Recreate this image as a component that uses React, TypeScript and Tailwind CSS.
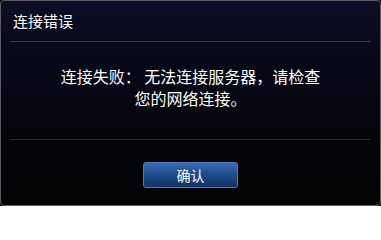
import React from "react";

const font = { fontFamily: '"Noto Sans CJK SC", "Noto Sans", sans-serif' };

export default function App() {
  return (
    <div className="h-[206px] w-[381px] bg-black" style={font}>
      <div className="flex h-full w-full flex-col overflow-hidden rounded-[4px] border border-[#5c5c64] bg-gradient-to-b from-[#0b0e25] via-[#05060f] to-[#020203]">
        <div className="flex h-[40px] items-center px-[12px] text-[15px] text-white">
          连接错误
        </div>
        <div className="mx-[9px] h-px bg-[#3a3a42]" />
        <div className="flex h-[97px] justify-center pt-[23px] text-center text-[16px] leading-[22px] text-white">
          <p>
            连接失败： 无法连接服务器，请检查
            <br />
            您的网络连接。
          </p>
        </div>
        <div className="mx-[9px] h-px bg-[#2a2a30]" />
        <div className="flex flex-1 justify-center pt-[22px]">
          <button className="h-[26px] w-[95px] rounded-[3px] border border-[#4d7cc0] bg-gradient-to-b from-[#3a6cb0] via-[#1c4a8a] to-[#0f3466] text-[14px] text-white">
            确认
          </button>
        </div>
      </div>
    </div>
  );
}
